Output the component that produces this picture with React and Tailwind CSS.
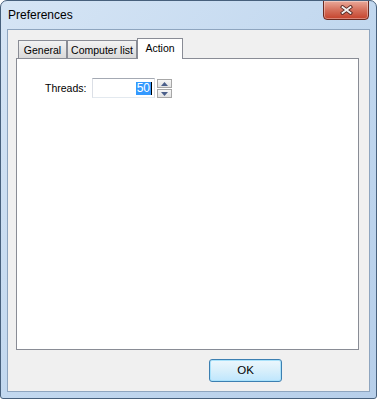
import React from "react"

const Tab = ({ label, active, w }) => {
    if (active) {
        return (
            <div className={`h-[21px] ${w} border border-b-0 border-[#898c95] bg-white flex justify-center pt-[3px] text-[10.5px] leading-[13px] text-black`}>
                {label}
            </div>
        )
    }
    return (
        <div className={`h-[18px] mb-[1px] ${w} border border-b-0 border-[#898c95] bg-gradient-to-b from-[#f3f3f3] to-[#d9d9d9] flex justify-center pt-[3px] text-[10.5px] leading-[13px] text-black`}>
            {label}
        </div>
    )
}

const Spin = ({ up }) => (
    <div className="w-[15px] h-[9px] border border-[#a7a7a7] bg-gradient-to-b from-[#f6f6f6] to-[#e2e2e2] flex items-center justify-center">
        <svg width="7" height="4" viewBox="0 0 7 4">
            {up ? <path d="M0 4 L3.5 0 L7 4 Z" fill="#4b5f8a" /> : <path d="M0 0 L3.5 4 L7 0 Z" fill="#4b5f8a" />}
        </svg>
    </div>
)

export default function App() {
    return (
        <div className="w-[377px] h-[399px] rounded-t-[7px] rounded-b-[3px] border border-[#47607c] bg-gradient-to-br from-[#d6e5f5] via-[#c2d8ef] to-[#b7cfea] flex flex-col font-['Liberation_Sans',Arial,sans-serif] overflow-hidden">
            {/* title bar */}
            <div className="h-[28px] flex justify-between pl-[7px] pr-[7px]">
                <div className="pt-[7px] text-[12px] leading-[15px] text-black">Preferences</div>
                <div className="-mt-px w-[46px] h-[20px] rounded-b-[4px] border border-[#6b2a20] bg-gradient-to-b from-[#e9a99a] via-[#d5705c] to-[#c5412a] flex items-center justify-center shadow-[inset_0_0_0_1px_rgba(255,255,255,0.35)]">
                    <svg width="13" height="10" viewBox="0 0 13 10">
                        <path d="M2.5 2 L10.5 8 M10.5 2 L2.5 8" stroke="#5a2a24" strokeWidth="3.6" strokeLinecap="square" />
                        <path d="M2.5 2 L10.5 8 M10.5 2 L2.5 8" stroke="#f2f2f2" strokeWidth="1.8" strokeLinecap="square" />
                    </svg>
                </div>
            </div>
            {/* client area */}
            <div className="flex-1 mx-[6px] mb-[6px] border border-[#8ea5bf] bg-[#f0f0f0] flex flex-col">
                <div className="flex flex-col pl-[8px] pr-[10px] pt-[8px]">
                    <div className="flex items-end pl-[2px] -mb-px relative z-10 h-[21px]">
                        <Tab label="General" w="w-[49px]" />
                        <Tab label="Computer list" w="w-[70px]" />
                        <Tab label="Action" active w="w-[46px]" />
                    </div>
                    <div className="h-[292px] border border-[#898c95] bg-white pt-[19px] pl-[28px]">
                        <div className="flex items-center">
                            <span className="text-[10.5px] leading-[13px] text-black w-[47px] pt-px">Threads:</span>
                            <div className="w-[63px] h-[20px] border border-[#abadb3] border-t-[#a4a9b3] border-x-[#dbdfe6] border-b-[#e3e9ef] bg-white flex items-center justify-end pr-[2px]">
                                <span className="bg-[#3399ff] text-white text-[12px] leading-[13px] px-[1px]">50</span>
                                <span className="w-px h-[13px] bg-black"></span>
                            </div>
                            <div className="ml-[2px] flex flex-col gap-[1px] pt-px">
                                <Spin up />
                                <Spin />
                            </div>
                        </div>
                    </div>
                </div>
                <div className="pl-[201px] pt-[9px]">
                    <div className="w-[73px] h-[23px] rounded-[3px] border border-[#3c7fb1] bg-gradient-to-b from-[#ecf7fd] via-[#d8effb] to-[#bee6fd] shadow-[inset_0_0_0_1px_#a9e2fb] flex items-center justify-center text-[11.5px] text-black">
                        OK
                    </div>
                </div>
            </div>
        </div>
    )
}
